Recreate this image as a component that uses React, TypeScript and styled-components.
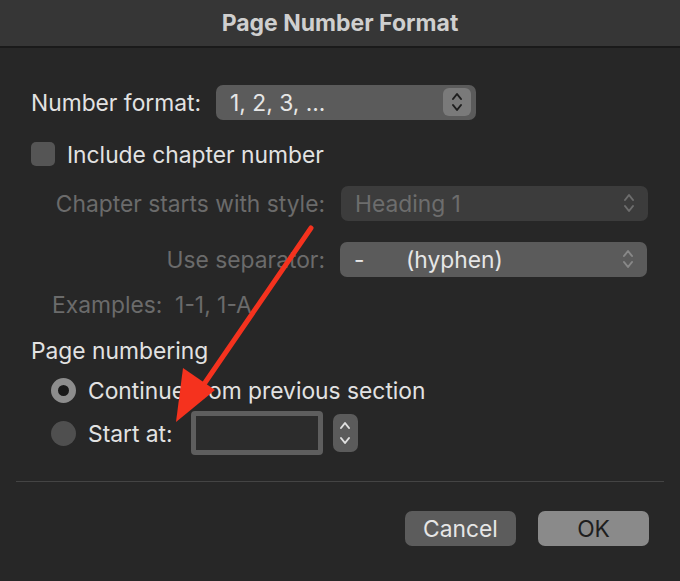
import React from "react";
import styled, { createGlobalStyle } from "styled-components";

const G = createGlobalStyle`
  html,body{margin:0;padding:0;background:#272727;}
  body{font-family:Inter,"Noto Sans",sans-serif;}
`;
const Win = styled.div`width:680px;height:581px;background:#272727;position:relative;overflow:hidden;color:#dcdcdc;font-size:22.8px;`;
const Title = styled.div`height:46px;background:#363636;border-bottom:2px solid #1a1a1a;display:flex;align-items:center;justify-content:center;font-weight:700;font-size:23px;color:#cfcfcf;`;
const Body = styled.div`padding:36px 0 0 31px;display:flex;flex-direction:column;`;
const Row = styled.div<{ h?: number; mt?: number; pl?: number }>`display:flex;align-items:center;height:${p => p.h ?? 36}px;margin-top:${p => p.mt ?? 0}px;padding-left:${p => p.pl ?? 0}px;`;
const Label = styled.span<{ dim?: boolean; w?: number }>`color:${p => (p.dim ? "#6b6b6b" : "#e2e2e2")};${p => (p.w ? `width:${p.w}px;text-align:right;` : "")}white-space:nowrap;`;
const Popup = styled.div<{ w: number; dim?: boolean }>`width:${p => p.w}px;height:35px;box-sizing:border-box;border-radius:7px;background:${p => (p.dim ? "#3c3c3c" : "#5b5b5b")};display:flex;align-items:center;padding:0 5px 0 14px;color:${p => (p.dim ? "#6d6d6d" : "#e6e6e6")};margin-left:${p => (p.dim ? 16 : 15)}px;`;
const PopText = styled.span`flex:1;display:flex;white-space:nowrap;`;
const Step = styled.div<{ boxed?: boolean }>`width:28px;height:28px;border-radius:6px;background:${p => (p.boxed ? "#7a7a7a" : "transparent")};display:flex;align-items:center;justify-content:center;`;
const Check = styled.div`width:24px;height:24px;border-radius:5px;background:#555;margin-right:12px;`;
const Radio = styled.div<{ on?: boolean }>`width:25px;height:25px;border-radius:50%;box-sizing:border-box;background:${p => (p.on ? "#191919" : "#4f4f4f")};border:${p => (p.on ? "7px solid #8d8d8d" : "none")};margin-right:12px;`;
const Input = styled.div`width:132px;height:44px;box-sizing:border-box;border:5px solid #5e5e5e;border-radius:4px;background:#2c2c2c;margin-left:18px;`;
const SmallStep = styled.div`width:25px;height:38px;border-radius:7px;background:#5b5b5b;margin-left:10px;display:flex;align-items:center;justify-content:center;`;
const Sep = styled.div`height:1px;background:#444;margin:25px 16px 0 16px;`;
const Buttons = styled.div`display:flex;justify-content:flex-end;gap:22px;padding:29px 31px 0 0;`;
const Btn = styled.div<{ primary?: boolean }>`width:111px;height:35px;border-radius:7px;background:${p => (p.primary ? "#8a8a8a" : "#5c5c5c")};color:${p => (p.primary ? "#1e1e1e" : "#e6e6e6")};display:flex;align-items:center;justify-content:center;`;
const Arrow = styled.svg`position:absolute;left:0;top:0;pointer-events:none;`;

const Chev = ({ c = "#dcdcdc" }: { c?: string }) => (
  <svg width="14" height="22" viewBox="0 0 14 22"><path d="M3 8 L7 3 L11 8 M3 14 L7 19 L11 14" fill="none" stroke={c} strokeWidth="2" strokeLinecap="round" strokeLinejoin="round" /></svg>
);

export default function App() {
  return (
    <Win>
      <G />
      <Title>Page Number Format</Title>
      <Body>
        <Row>
          <Label>Number format:</Label>
          <Popup w={260}><PopText>1, 2, 3, ...</PopText><Step boxed><Chev c="#1e1e1e" /></Step></Popup>
        </Row>
        <Row mt={16}><Check /><Label>Include chapter number</Label></Row>
        <Row mt={13} pl={20}>
          <Label dim w={274}>Chapter starts with style:</Label>
          <Popup w={307} dim><PopText>Heading 1</PopText><Step><Chev c="#6d6d6d" /></Step></Popup>
        </Row>
        <Row mt={20} pl={20}>
          <Label dim w={274}>Use separator:</Label>
          <Popup w={307}><PopText><span style={{ width: 52 }}>-</span>(hyphen)</PopText><Step><Chev c="#888" /></Step></Popup>
        </Row>
        <Row mt={9} pl={21}><Label dim>Examples:&nbsp;&nbsp;1-1, 1-A</Label></Row>
        <Row mt={10}><Label>Page numbering</Label></Row>
        <Row mt={4} pl={20}><Radio on /><Label>Continue from previous section</Label></Row>
        <Row h={46} mt={2} pl={20}>
          <Radio /><Label>Start at:</Label>
          <Input />
          <SmallStep>
            <svg width="14" height="30" viewBox="0 0 14 30"><path d="M3 10 L7 5 L11 10 M3 20 L7 25 L11 20" fill="none" stroke="#e0e0e0" strokeWidth="2" strokeLinecap="round" strokeLinejoin="round" /></svg>
          </SmallStep>
        </Row>
      </Body>
      <Sep />
      <Buttons><Btn>Cancel</Btn><Btn primary>OK</Btn></Buttons>
      <Arrow width="680" height="581">
        <line x1="311" y1="228" x2="200" y2="390" stroke="#f5321e" strokeWidth="5" strokeLinecap="round" />
        <polygon points="176,422 183,368 215,390" fill="#f5321e" />
      </Arrow>
    </Win>
  );
}
